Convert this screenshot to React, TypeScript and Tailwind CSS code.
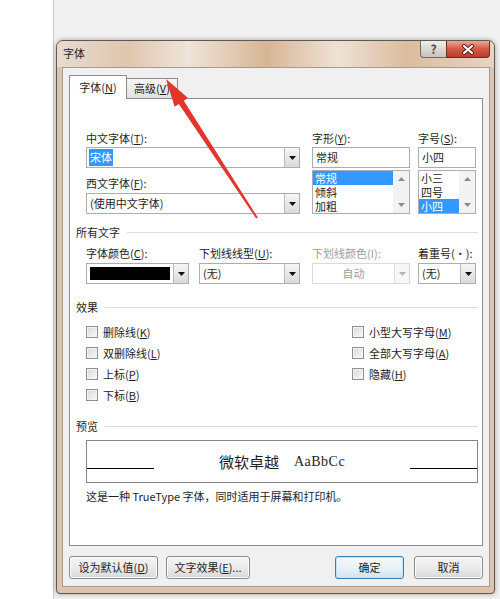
import React from "react";

const txt = "text-[11px] leading-[16px] text-[#1e1e1e]";

function Tri({ muted }: { muted?: boolean }) {
  return (
    <svg width="7" height="4" viewBox="0 0 7 4">
      <path d="M0 0h7L3.5 4z" fill={muted ? "#b4b4b4" : "#111"} />
    </svg>
  );
}

function DropBtn({ muted }: { muted?: boolean }) {
  return (
    <div
      className={
        "w-[15px] h-full flex items-center justify-center border-l " +
        (muted
          ? "border-[#e0e0e0] bg-[#f7f7f7]"
          : "border-[#b9b9b9] bg-gradient-to-b from-[#f6f6f6] to-[#dadada]")
      }
    >
      <Tri muted={muted} />
    </div>
  );
}

function Select({ children, muted, center }: { children: React.ReactNode; muted?: boolean; center?: boolean }) {
  return (
    <div
      className={
        "h-[21px] flex bg-white border " + (muted ? "border-[#d9d9d9]" : "border-[#abadb3]")
      }
    >
      <div
        className={
          "flex-1 flex items-center px-[3px] text-[11px] " +
          (center ? "justify-center " : "") +
          (muted ? "text-[#9d9d9d]" : "text-[#1e1e1e]")
        }
      >
        {children}
      </div>
      <DropBtn muted={muted} />
    </div>
  );
}

function Input({ children }: { children: React.ReactNode }) {
  return (
    <div className="h-[21px] flex items-center px-[3px] bg-white border border-[#abadb3] text-[11px] text-[#1e1e1e]">
      {children}
    </div>
  );
}

function ListBox({ items, sel }: { items: string[]; sel: number }) {
  return (
    <div className="h-[44px] mt-[2px] flex bg-white border border-[#abadb3]">
      <div className="flex-1 flex flex-col">
        {items.map((it, i) => (
          <div
            key={it}
            className={
              "h-[14px] leading-[14px] text-[11px] px-[2px] overflow-hidden " +
              (i === sel ? "bg-[#3399ff] text-white" : "text-[#1e1e1e]")
            }
          >
            {it}
          </div>
        ))}
      </div>
      <div className="w-[16px] bg-[#f3f3f3] flex flex-col items-center justify-between py-[6px]">
        <svg width="7" height="4" viewBox="0 0 7 4">
          <path d="M0 4h7L3.5 0z" fill="#8a8a8a" />
        </svg>
        <svg width="7" height="4" viewBox="0 0 7 4">
          <path d="M0 0h7L3.5 4z" fill="#8a8a8a" />
        </svg>
      </div>
    </div>
  );
}

function Header({ title, mt }: { title: string; mt: string }) {
  return (
    <div className={"flex items-center h-[16px] -ml-[10px] " + mt}>
      <span className={txt + " mr-[7px]"}>{title}</span>
      <div className="flex-1 h-px bg-[#dcdcdc]" />
    </div>
  );
}

function Check({ children }: { children: React.ReactNode }) {
  return (
    <div className="h-[21px] flex items-center">
      <div className="w-[12px] h-[12px] border border-[#8e8f8f] bg-gradient-to-br from-[#d8d8d8] to-[#f9f9f9] shadow-[inset_0_0_0_1px_#f4f4f4]" />
      <span className={txt + " ml-[5px]"}>{children}</span>
    </div>
  );
}

function Btn({ children, w, def }: { children: React.ReactNode; w: string; def?: boolean }) {
  return (
    <div
      className={
        "h-[23px] rounded-[3px] border flex items-center justify-center text-[11px] text-[#1e1e1e] bg-gradient-to-b " +
        w +
        (def
          ? " border-[#3c7fb1] from-[#f4f9fc] via-[#e9f2f8] to-[#d3e3ee] shadow-[inset_0_0_0_1px_#bfe3f8]"
          : " border-[#8a8a8a] from-[#f4f4f4] via-[#ebebeb] to-[#d8d8d8] shadow-[inset_0_0_0_1px_#fbfbfb]")
      }
    >
      {children}
    </div>
  );
}

export default function App() {
  return (
    <div className="relative w-[500px] h-[599px] flex bg-white overflow-hidden font-['Noto_Sans_CJK_SC',sans-serif]">
      <div className="w-[53px] bg-white" />
      <div className="flex-1 border-l border-[#c6c6c6] bg-[#f1f1f1] pt-[40px] pl-[2px]">
        <div className="w-[439px] h-[554px] flex flex-col rounded-t-[7px] rounded-b-[4px] border border-[#5e5955] bg-[#dcc4af] shadow-[0_0_5px_rgba(0,0,0,0.35)] overflow-hidden">
          {/* title bar */}
          <div className="h-[26px] flex justify-between bg-[linear-gradient(90deg,#e8dccf_0%,#dfc6ae_16%,#efe4d9_30%,#d7b594_48%,#eee2d6_64%,#dbbd9f_80%,#e6d4c2_100%)]">
            <div className="pl-[6px] pt-[4px] text-[11px] leading-[16px] text-[#1e1e1e]">字体</div>
            <div className="flex mr-[4px] h-[17px]">
              <div className="w-[26px] h-full rounded-bl-[4px] border border-t-0 border-r-0 border-[#6f6a66] bg-gradient-to-b from-[#f1eeeb] to-[#c9c2bb] flex items-center justify-center text-[12px] font-bold text-[#4a4a4a] leading-none">
                ?
              </div>
              <div className="w-[44px] h-full rounded-br-[4px] border border-t-0 border-[#6e2b22] bg-gradient-to-b from-[#e8a696] via-[#d25a46] to-[#c0392a] flex items-center justify-center">
                <svg width="14" height="11" viewBox="0 0 14 11">
                  <path d="M3 2l8 7M11 2l-8 7" stroke="#5a1a12" strokeWidth="4" strokeLinecap="round" />
                  <path d="M3 2l8 7M11 2l-8 7" stroke="#fff" strokeWidth="2.2" strokeLinecap="round" />
                </svg>
              </div>
            </div>
          </div>
          {/* client */}
          <div className="ml-[5px] mr-[4px] mb-[5px] h-[520px] border border-[#a89a8c] bg-[#f0f0f0] pl-[6px] pr-[6px] pt-[7px] flex flex-col">
            <div className="flex items-end h-[23px]">
              <div className="relative z-10 -mb-px w-[58px] h-[24px] bg-white border border-b-0 border-[#898c95] flex items-center justify-center text-[11px] text-[#1e1e1e]">
                字体(<u>N</u>)
              </div>
              <div className="w-[52px] h-[20px] -ml-px border border-b-0 border-[#898c95] bg-gradient-to-b from-[#f6f6f6] to-[#e1e1e1] flex items-center justify-center text-[11px] text-[#1e1e1e]">
                高级(<u>V</u>)
              </div>
            </div>
            <div className="h-[448px] bg-white border border-[#898c95] pl-[16px] pr-[4px] pt-[31px] flex flex-col">
              {/* font row */}
              <div className="flex">
                <div className="w-[214px]">
                  <div className={txt}>中文字体(<u>T</u>):</div>
                  <div className="mt-px">
                    <Select>
                      <span className="bg-[#3399ff] text-white px-px -ml-px">宋体</span>
                    </Select>
                  </div>
                  <div className={txt + " mt-[7px]"}>西文字体(<u>F</u>):</div>
                  <div className="mt-[2px]">
                    <Select>(使用中文字体)</Select>
                  </div>
                </div>
                <div className="w-[98px] ml-[12px]">
                  <div className={txt}>字形(<u>Y</u>):</div>
                  <div className="mt-px">
                    <Input>常规</Input>
                  </div>
                  <ListBox items={["常规", "倾斜", "加粗"]} sel={0} />
                </div>
                <div className="w-[58px] ml-[8px]">
                  <div className={txt}>字号(<u>S</u>):</div>
                  <div className="mt-px">
                    <Input>小四</Input>
                  </div>
                  <ListBox items={["小三", "四号", "小四"]} sel={2} />
                </div>
              </div>

              <Header title="所有文字" mt="mt-[10px]" />
              <div className="flex mt-[5px]">
                <div className="w-[103px]">
                  <div className={txt}>字体颜色(<u>C</u>):</div>
                  <div className="mt-[2px] h-[21px] flex bg-white border border-[#abadb3]">
                    <div className="flex-1 p-[3px]">
                      <div className="h-full bg-black" />
                    </div>
                    <DropBtn />
                  </div>
                </div>
                <div className="w-[101px] ml-[10px]">
                  <div className={txt}>下划线线型(<u>U</u>):</div>
                  <div className="mt-[2px]">
                    <Select>(无)</Select>
                  </div>
                </div>
                <div className="w-[98px] ml-[12px]">
                  <div className="text-[11px] leading-[16px] text-[#9d9d9d]">下划线颜色(I):</div>
                  <div className="mt-[2px]">
                    <Select muted center>
                      自动
                    </Select>
                  </div>
                </div>
                <div className="w-[58px] ml-[8px]">
                  <div className={txt}>着重号(·):</div>
                  <div className="mt-[2px]">
                    <Select>(无)</Select>
                  </div>
                </div>
              </div>

              <Header title="效果" mt="mt-[15px]" />
              <div className="grid grid-cols-[266px_1fr] mt-[6px]">
                <div>
                  <Check>删除线(<u>K</u>)</Check>
                  <Check>双删除线(<u>L</u>)</Check>
                  <Check>上标(<u>P</u>)</Check>
                  <Check>下标(<u>B</u>)</Check>
                </div>
                <div>
                  <Check>小型大写字母(<u>M</u>)</Check>
                  <Check>全部大写字母(<u>A</u>)</Check>
                  <Check>隐藏(<u>H</u>)</Check>
                </div>
              </div>

              <Header title="预览" mt="mt-[13px]" />
              <div className="mt-[6px] h-[43px] border border-[#858585] flex items-center">
                <div className="w-[67px] h-px bg-black mt-[13px]" />
                <div className="flex-1 flex items-center justify-center gap-[15px]">
                  <span className="text-[15px] leading-[18px] text-[#1e1e1e]">微软卓越</span>
                  <span className="text-[14px] leading-[18px] tracking-[0.5px] text-[#1e1e1e] font-['Liberation_Serif',serif]">AaBbCc</span>
                </div>
                <div className="w-[67px] h-px bg-black mt-[13px]" />
              </div>
              <div className={txt + " mt-[5px]"}>这是一种 TrueType 字体，同时适用于屏幕和打印机。</div>
            </div>
            <div className="flex mt-[10px]">
              <Btn w="w-[89px]">设为默认值(<u>D</u>)</Btn>
              <div className="ml-[8px]">
                <Btn w="w-[84px]">文字效果(<u>E</u>)...</Btn>
              </div>
              <div className="ml-auto">
                <Btn w="w-[69px]" def>
                  确定
                </Btn>
              </div>
              <div className="ml-[10px]">
                <Btn w="w-[69px]">取消</Btn>
              </div>
            </div>
          </div>
        </div>
      </div>
      {/* red annotation arrow */}
      <svg className="absolute inset-0 pointer-events-none" width="500" height="599" viewBox="0 0 500 599">
        <polygon
          points="166,79 188,98 183.8,100.8 257.8,217.5 256.2,218.5 178.8,104 174.6,106.8"
          fill="#e2352b"
        />
      </svg>
    </div>
  );
}
